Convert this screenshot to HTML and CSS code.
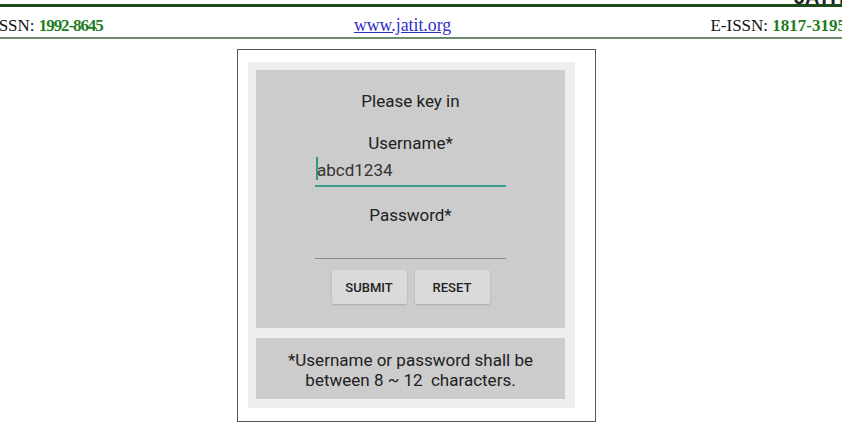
FILE: index.html
```html
<!DOCTYPE html>
<html lang="en">
<head>
    <meta charset="UTF-8">
    <meta name="viewport" content="width=device-width, initial-scale=1.0">
    <title>Login screen</title>
    <link rel="stylesheet" href="styles.css">
</head>
<body>

    <header class="journal">
        <div class="brand"><span>JATIT</span></div>
        <div class="issn-row">
            <span class="issn">ISSN: <b>1992-8645</b></span>
            <a class="site" href="#">www.jatit.org</a>
            <span class="eissn">E-ISSN: <b>1817-3195</b></span>
        </div>
    </header>

    <div class="figure">
        <div class="screen">
            <form class="login" action="">
                <p class="title">Please key in</p>
                <p class="label">Username*</p>
                <div class="field active"><span class="caret"></span>abcd1234</div>
                <p class="label pass">Password*</p>
                <div class="field"></div>
                <div class="buttons">
                    <button type="button">SUBMIT</button>
                    <button type="button">RESET</button>
                </div>
            </form>
            <div class="note">*Username or password shall be<br>between 8 ~ 12&nbsp; characters.</div>
        </div>
    </div>

</body>
</html>
```

FILE: styles.css
```css
*{
    margin: 0;
    padding: 0;
    box-sizing: border-box;
}
body{
    background-color: #fff;
    overflow: hidden;
}

/* journal page header */
.brand{
    height: 4px;
    overflow: hidden;
    display: flex;
    justify-content: flex-end;
    align-items: flex-end;
}
.brand span{
    font-family: "Liberation Sans", Arial, sans-serif;
    font-weight: bold;
    font-size: 20px;
    line-height: 20px;
    color: #222;
    margin-bottom: -3px;
    margin-right: -6px;
}
.issn-row{
    display: flex;
    justify-content: space-between;
    align-items: baseline;
    height: 35px;
    padding-top: 8px;
    margin: 0 -4px 0 -7px;
    border-top: 3px solid #1c4a1c;
    border-bottom: 2px solid #6e8c6e;
    font-family: "Liberation Serif", "Times New Roman", serif;
    font-size: 17px;
    line-height: 20px;
    color: #111;
}
.issn-row b{
    color: #1f7d1f;
}
.issn b{
    letter-spacing: -1.1px;
}
.site{
    color: #3030c8;
    font-size: 17.8px;
    margin-right: 8px;
}

/* phone screenshot frame */
.figure{
    width: 359px;
    height: 373px;
    margin: 10px 0 0 237px;
    padding: 12px 20px 13px 10px;
    border: 1px solid #555;
    background-color: #fff;
}
.screen{
    height: 100%;
    display: flex;
    flex-direction: column;
    gap: 10px;
    padding: 8px 10px 9px 8px;
    background-color: #eee;
}
.login, .note{
    background-color: #ccc;
    font-family: Roboto, "Noto Sans", sans-serif;
    color: #212121;
    font-size: 17px;
}
.login{
    height: 258px;
    padding-top: 21px;
    display: flex;
    flex-direction: column;
    align-items: center;
}
.title, .label{
    line-height: 20px;
}
.label{
    margin-top: 22px;
}
.label.pass{
    margin-top: 18px;
}
.field{
    width: 191px;
    height: 30px;
    margin-top: 4px;
    padding-bottom: 3px;
    display: flex;
    align-items: center;
    line-height: 20px;
    color: #333;
    border-bottom: 1px solid #8a8a8a;
}
.field.active{
    border-bottom: 2px solid #3e9c90;
}
.caret{
    align-self: flex-start;
    width: 2px;
    height: 23px;
    margin: 0 -1px 0 1px;
    background-color: #2f9688;
}
.buttons{
    display: flex;
    gap: 8px;
    margin-top: 11px;
}
.buttons button{
    width: 75px;
    height: 34px;
    border: none;
    border-radius: 2px;
    background-color: #dadada;
    box-shadow: 0 1px 2px rgba(0, 0, 0, 0.18);
    font-family: Roboto, "Noto Sans", sans-serif;
    font-weight: 500;
    font-size: 13px;
    color: #222;
}
.note{
    height: 61px;
    padding-top: 13px;
    text-align: center;
    line-height: 19.5px;
}
```
